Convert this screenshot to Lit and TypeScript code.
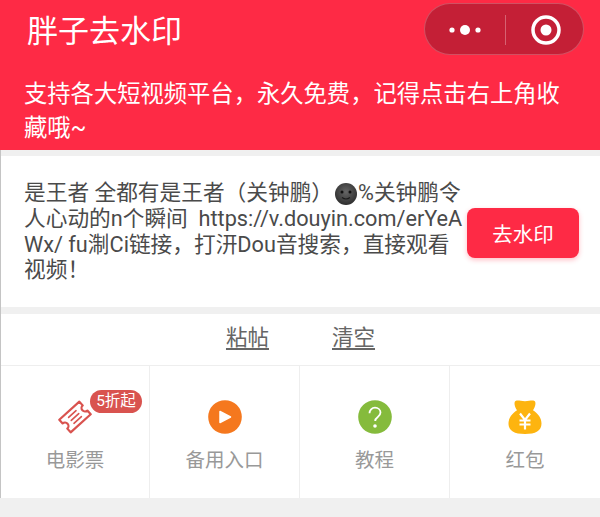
import { LitElement, html, css, svg } from 'lit';
import { customElement } from 'lit/decorators.js';

const ticket = svg`<g fill="none" stroke="#d9534f" stroke-width="2.200" stroke-linejoin="round" stroke-linecap="round" transform="rotate(-42 17 17)">
  <path d="M3.500 8.500h27v5a3.500 3.500 0 0 0 0 7v5h-27v-5a3.500 3.500 0 0 0 0-7z"/>
  <path d="M12 13h10M12 17h10M12 21h10" stroke-width="1.600"/>
</g>`;

const play = svg`<circle cx="17" cy="17" r="16.800" fill="#f5781e"/><path d="M12 11.500 22.500 17 12 22.500z" fill="#fff" stroke="#fff" stroke-width="1.500" stroke-linejoin="round"/>`;

const help = svg`<circle cx="17" cy="17" r="16.800" fill="#85bb3c"/>
  <path d="M11.500 13.200c0-3 2.400-5.500 5.500-5.500s5.500 2.200 5.500 4.900c0 2-1 3.100-2.700 4.300-1.700 1.200-2.600 2.100-2.600 4.100" fill="none" stroke="#fff" stroke-width="1.800"/>
  <circle cx="17" cy="26" r="1.800" fill="#fff"/>`;

const bag = svg`<path d="M7 1C9.500 0 12 1.200 16.500 1.200S23.500 0 26 1c1.600.7 1.300 5.500-1.500 9.300C29.500 13.500 33 18 33 23.500 33 31 27 34 16.500 34S0 31 0 23.500C0 18 3.500 13.500 8.500 10.300 5.700 6.500 5.400 1.700 7 1z" fill="#fdb40f"/>
  <path d="M11.500 13.500 16.500 20l5-6.500M16.500 20v9.500M11 20.500h11M11 24.500h11" fill="none" stroke="#fff" stroke-width="2.200"/>`;

const items = [
  { label: '电影票', icon: ticket, badge: '5折起', box: '0 0 34 34' },
  { label: '备用入口', icon: play, box: '0 0 34 34' },
  { label: '教程', icon: help, box: '0 0 34 34' },
  { label: '红包', icon: bag, box: '0 0 33 34' },
];

@customElement('app-root')
export class AppRoot extends LitElement {
  static styles = css`
    :host {
      display: block;
      height: 517px;
      overflow: hidden;
      background: #f0f0f0;
      font-family: Roboto, "Noto Sans CJK SC", sans-serif;
    }

    .head {
      background: #fe2a45;
      color: #fff;
      height: 150px;
      box-sizing: border-box;
      padding: 3px 16px 0 24px;
    }

    .top {
      display: flex;
      justify-content: space-between;
      align-items: center;
      height: 52px;
    }

    .title {
      font-size: 31px;
      line-height: 46px;
      padding: 6px 0 0 3px;
    }

    .capsule {
      display: flex;
      align-items: center;
      width: 160px;
      height: 52px;
      box-sizing: border-box;
      border: 1px solid rgba(255, 255, 255, 0.22);
      border-radius: 26px;
      background: #c41f36;
    }

    .capsule .part {
      flex: 1;
      height: 30px;
      display: flex;
      align-items: center;
      justify-content: center;
      margin-top: 2px;
    }

    .capsule .part:first-child {
      flex: 0 0 80px;
    }

    .capsule .part + .part {
      border-left: 1px solid rgba(255, 255, 255, 0.3);
      padding-left: 3px;
    }

    .notice {
      margin: 23px 0 0;
      width: 545px;
      font-size: 23.300px;
      line-height: 33.500px;
    }

    main {
      border-left: 1px solid #c4c4c4;
      padding-top: 6px;
    }

    .input {
      display: flex;
      align-items: flex-start;
      height: 151px;
      background: #fff;
      box-sizing: border-box;
      padding-left: 23px;
    }

    .text {
      width: 443px;
      margin-top: 24px;
      font-size: 21.700px;
      line-height: 25.800px;
      color: #4a4a4a;
      white-space: nowrap;
    }

    .text svg {
      vertical-align: -5px;
      margin: 0 1px 0 2px;
    }

    .go {
      width: 112px;
      height: 50px;
      margin-top: 52px;
      border: 0;
      border-radius: 8px;
      background: #fe2a45;
      box-shadow: 0 2px 5px rgba(254, 42, 69, 0.3);
      color: #fff;
      font: inherit;
      font-size: 20.500px;
      padding: 0;
    }

    .actions {
      display: flex;
      justify-content: center;
      gap: 63px;
      margin-top: 7px;
      box-sizing: border-box;
      padding: 0 0 8px 0;
      height: 52px;
      background: #fff;
      align-items: center;
      border-bottom: 1px solid #eee;
      font-size: 21.500px;
      color: #666;
    }

    .actions span {
      text-decoration: underline;
      text-underline-offset: 3px;
    }

    .grid {
      display: grid;
      grid-template-columns: 149px 150px 150px 1fr;
      background: #fff;
      height: 132px;
    }

    .cell {
      position: relative;
      display: flex;
      flex-direction: column;
      align-items: center;
      border-right: 1px solid #eee;
    }

    .cell:last-child {
      border-right: 0;
    }

    .icon {
      height: 34px;
      margin-top: 34px;
      display: flex;
      align-items: center;
      justify-content: center;
    }

    .label {
      margin-top: 13px;
      font-size: 19.500px;
      line-height: 28px;
      color: #999;
    }

    .badge {
      position: absolute;
      left: 89px;
      top: 24px;
      height: 23px;
      width: 52px;
      border-radius: 12px;
      background: #d9534f;
      color: #fff;
      font-size: 15.500px;
      line-height: 23px;
      text-align: center;
    }
  `;

  render() {
    return html`
      <div class="head">
        <div class="top">
          <div class="title">胖子去水印</div>
          <div class="capsule">
            <div class="part">
              <svg width="34" height="12" viewBox="0 0 34 12"><g fill="#fff"><circle cx="4" cy="6" r="2.600"/><circle cx="17" cy="6" r="5"/><circle cx="30" cy="6" r="2.600"/></g></svg>
            </div>
            <div class="part">
              <svg width="32" height="32" viewBox="0 0 32 32"><circle cx="16" cy="16" r="13" fill="none" stroke="#fff" stroke-width="3.500"/><circle cx="16" cy="16" r="5.500" fill="#fff"/></svg>
            </div>
          </div>
        </div>
        <p class="notice">支持各大短视频平台，永久免费，记得点击右上角收藏哦~</p>
      </div>
      <main>
        <div class="input">
          <div class="text">
            是王者 全都有是王者（关钟鹏）<svg width="22" height="22" viewBox="0 0 22 22"><defs><radialGradient id="moon" cx="0.5" cy="0.4" r="0.6"><stop offset="0" stop-color="#666"/><stop offset="1" stop-color="#2e2e2e"/></radialGradient></defs><circle cx="11" cy="11" r="11" fill="url(#moon)"/><circle cx="7" cy="9" r="1.500" fill="#111"/><circle cx="15" cy="9" r="1.500" fill="#111"/><path d="M7 14.500q4 3 8 0" fill="none" stroke="#1b1b1b" stroke-width="1.200"/></svg>%关钟鹏令<br />
            人心动的n个瞬间&nbsp; https://v.douyin.com/erYeA<br />
            Wx/ fu淛Ci链接，打汧Dou音搜索，直接观看<br />
            视频！
          </div>
          <button class="go">去水印</button>
        </div>
        <div class="actions"><span>粘帖</span><span>清空</span></div>
        <div class="grid">
          ${items.map(
            (it) => html`
              <div class="cell">
                <div class="icon">
                  <svg width="34" height="34" viewBox=${it.box}>${it.icon}</svg>
                </div>
                <div class="label">${it.label}</div>
                ${it.badge ? html`<div class="badge">${it.badge}</div>` : ''}
              </div>
            `
          )}
        </div>
      </main>
    `;
  }
}
